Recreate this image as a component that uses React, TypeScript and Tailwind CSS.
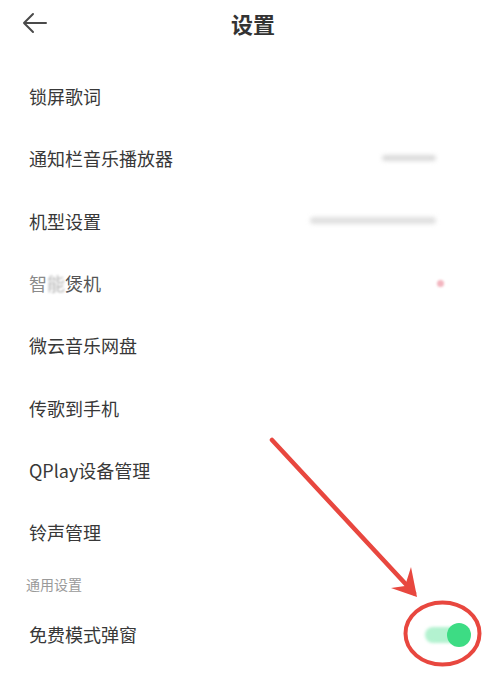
import React from "react";

const font = { fontFamily: '"Noto Sans CJK SC", "Noto Sans", sans-serif' };

type Row = { label: React.ReactNode; value?: React.ReactNode };

const rows: Row[] = [
  { label: "锁屏歌词" },
  {
    label: "通知栏音乐播放器",
    value: <span className="block w-[54px] h-[6px] rounded-full bg-[#dadada] blur-[2px]" />,
  },
  {
    label: "机型设置",
    value: <span className="block w-[126px] h-[7px] rounded-full bg-[#e0e0e0] blur-[2px]" />,
  },
  {
    label: (
      <span>
        <span className="text-[#8a8a8a]">智</span>
        <span className="text-[#b5b5b5] blur-[1px]">能</span>
        <span className="text-[#555]">煲机</span>
      </span>
    ),
    value: <span className="block w-[7px] h-[7px] rounded-full bg-[#f3b5bf] blur-[1px] mr-[-8px]" />,
  },
  { label: "微云音乐网盘" },
  { label: "传歌到手机" },
  { label: "QPlay设备管理" },
  { label: "铃声管理" },
];

function BackArrow() {
  return (
    <svg width="26" height="22" viewBox="0 0 26 22" fill="none">
      <path
        d="M24 11H2M11 2L2 11l9 9"
        stroke="#4a4a4a"
        strokeWidth="2"
        strokeLinecap="round"
        strokeLinejoin="round"
      />
    </svg>
  );
}

export default function App() {
  return (
    <div className="relative w-[500px] h-[679px] bg-white overflow-hidden" style={font}>
      {/* Header */}
      <div className="relative h-[46px] flex items-center justify-center">
        <div className="absolute left-[22px] top-[12px]">
          <BackArrow />
        </div>
        <h1 className="text-[22px] font-bold text-[#333] leading-none ml-[6px]">设置</h1>
      </div>

      {/* List */}
      <div className="pt-[19px]">
        {rows.map((row, i) => (
          <div key={i} className="h-[62.3px] flex items-center justify-between pl-[29px] pr-[64px]">
            <span className="text-[18px] text-[#383838] leading-none">{row.label}</span>
            {row.value}
          </div>
        ))}

        {/* Section header */}
        <div className="h-[41px] flex items-center pl-[26px]">
          <span className="text-[14px] text-[#9a9a9a] leading-none">通用设置</span>
        </div>

        <div className="h-[60px] flex items-center justify-between pl-[29px] pr-[29px]">
          <span className="text-[18px] text-[#383838] leading-none">免费模式弹窗</span>
          <div className="relative w-[46px] h-[24px] mt-[2px] flex items-center">
            <div className="absolute left-0 right-[6px] h-[16px] rounded-full bg-[#b3f2d0] blur-[1.5px]" />
            <div className="absolute right-0 w-[24px] h-[24px] rounded-full bg-[#3ddc84] blur-[0.5px]" />
          </div>
        </div>
      </div>

      {/* Annotation overlay */}
      <svg className="absolute inset-0 pointer-events-none" width="500" height="679" viewBox="0 0 500 679">
        <line x1="272" y1="440" x2="414" y2="593" stroke="#e8473f" strokeWidth="4.5" strokeLinecap="round" />
        <path d="M411 567 L417 597 L391 588 L405 586 Z" fill="#e8473f" />
        <ellipse cx="442.5" cy="633.5" rx="37" ry="31" fill="none" stroke="#e8473f" strokeWidth="4" />
      </svg>
    </div>
  );
}
